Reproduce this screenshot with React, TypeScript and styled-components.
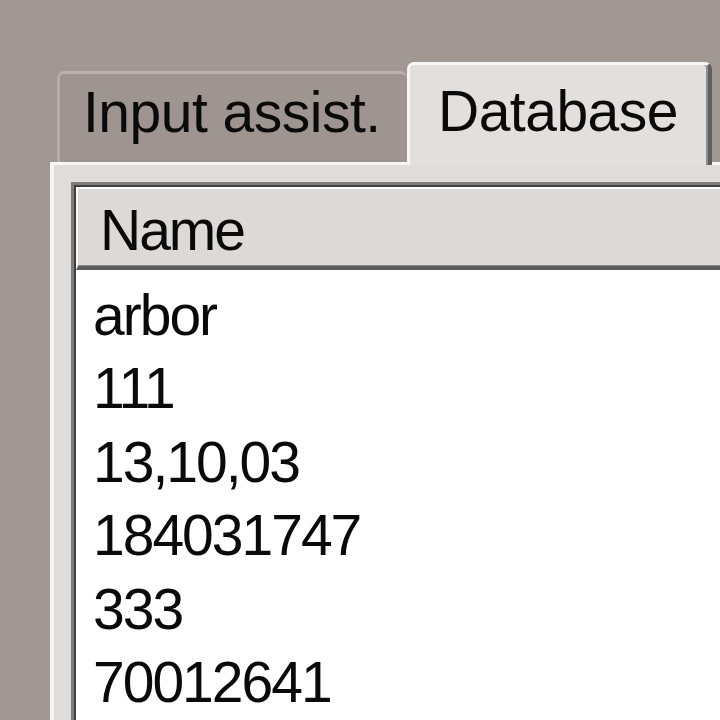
import * as React from "react";
import styled, { createGlobalStyle } from "styled-components";

const GlobalStyle = createGlobalStyle`
    html, body {
        margin: 0;
        padding: 0;
        background: #a19894;
    }
    body {
        font-family: "Liberation Sans", Arial, sans-serif;
        color: #0a0a0a;
    }
`;

const Window = styled.div`
    width: 720px;
    height: 720px;
    overflow: hidden;
    box-sizing: border-box;
    padding: 62px 0 0 50px;
    font-size: 57px;
    letter-spacing: -2px;
`;

const TabStrip = styled.div`
    display: flex;
    align-items: flex-end;
    padding-left: 7px;
    position: relative;
    z-index: 1;
`;

const Tab = styled.div<{active?:boolean}>`
    box-sizing: border-box;
    line-height: 64px;
    letter-spacing: -0.5px;
    white-space: nowrap;
    border-radius: 7px 7px 0 0;
    ${props=>props.active ? `
        width: 305px;
        height: 103px;
        margin-bottom: -3px;
        padding: 14px 0 0 28px;
        background: #e2dfdc;
        border-top: 3px solid #f7f7f7;
        border-left: 3px solid #f7f7f7;
        border-right: 4px solid #5e5e5e;
        box-shadow: inset -2px 0 0 #8e8e8e;
    ` : `
        width: 350px;
        height: 91px;
        padding: 6px 0 0 23px;
        background: #9e9591;
        border-top: 3px solid #b9b2ae;
        border-left: 3px solid #b3aca8;
    `}
`;

const Panel = styled.div`
    box-sizing: border-box;
    height: 700px;
    padding: 17px 0 0 17px;
    background: #dfdcd9;
    border-top: 3px solid #f7f7f7;
    border-left: 4px solid #f4f4f4;
`;

const ListView = styled.div`
    height: 100%;
    background: #ffffff;
    border-top: 3px solid #7c7c7c;
    border-left: 3px solid #7c7c7c;
    box-shadow: inset 2px 2px 0 #404040;
    padding: 2px 0 0 2px;
`;

const ColumnHeader = styled.div`
    box-sizing: border-box;
    height: 83px;
    line-height: 64px;
    padding: 9px 0 0 22px;
    background: #dcd9d6;
    border-top: 2px solid #fbfbfb;
    border-left: 2px solid #fbfbfb;
    border-bottom: 4px solid #5c5c5c;
    box-shadow: 0 -1px 0 #8a8a8a inset;
`;

const Rows = styled.div`
    padding: 9px 0 0 17px;
`;

const Row = styled.div`
    line-height: 73.4px;
    white-space: nowrap;
`;

const names = ["arbor", "111", "13,10,03", "184031747", "333", "70012641"];

const App = () => {
    return (
        <>
            <GlobalStyle />
            <Window>
                <TabStrip>
                    <Tab>Input assist.</Tab>
                    <Tab active>Database</Tab>
                </TabStrip>
                <Panel>
                    <ListView>
                        <ColumnHeader>Name</ColumnHeader>
                        <Rows>
                            {names.map(n => <Row key={n}>{n}</Row>)}
                        </Rows>
                    </ListView>
                </Panel>
            </Window>
        </>
    );
};

export default App;
